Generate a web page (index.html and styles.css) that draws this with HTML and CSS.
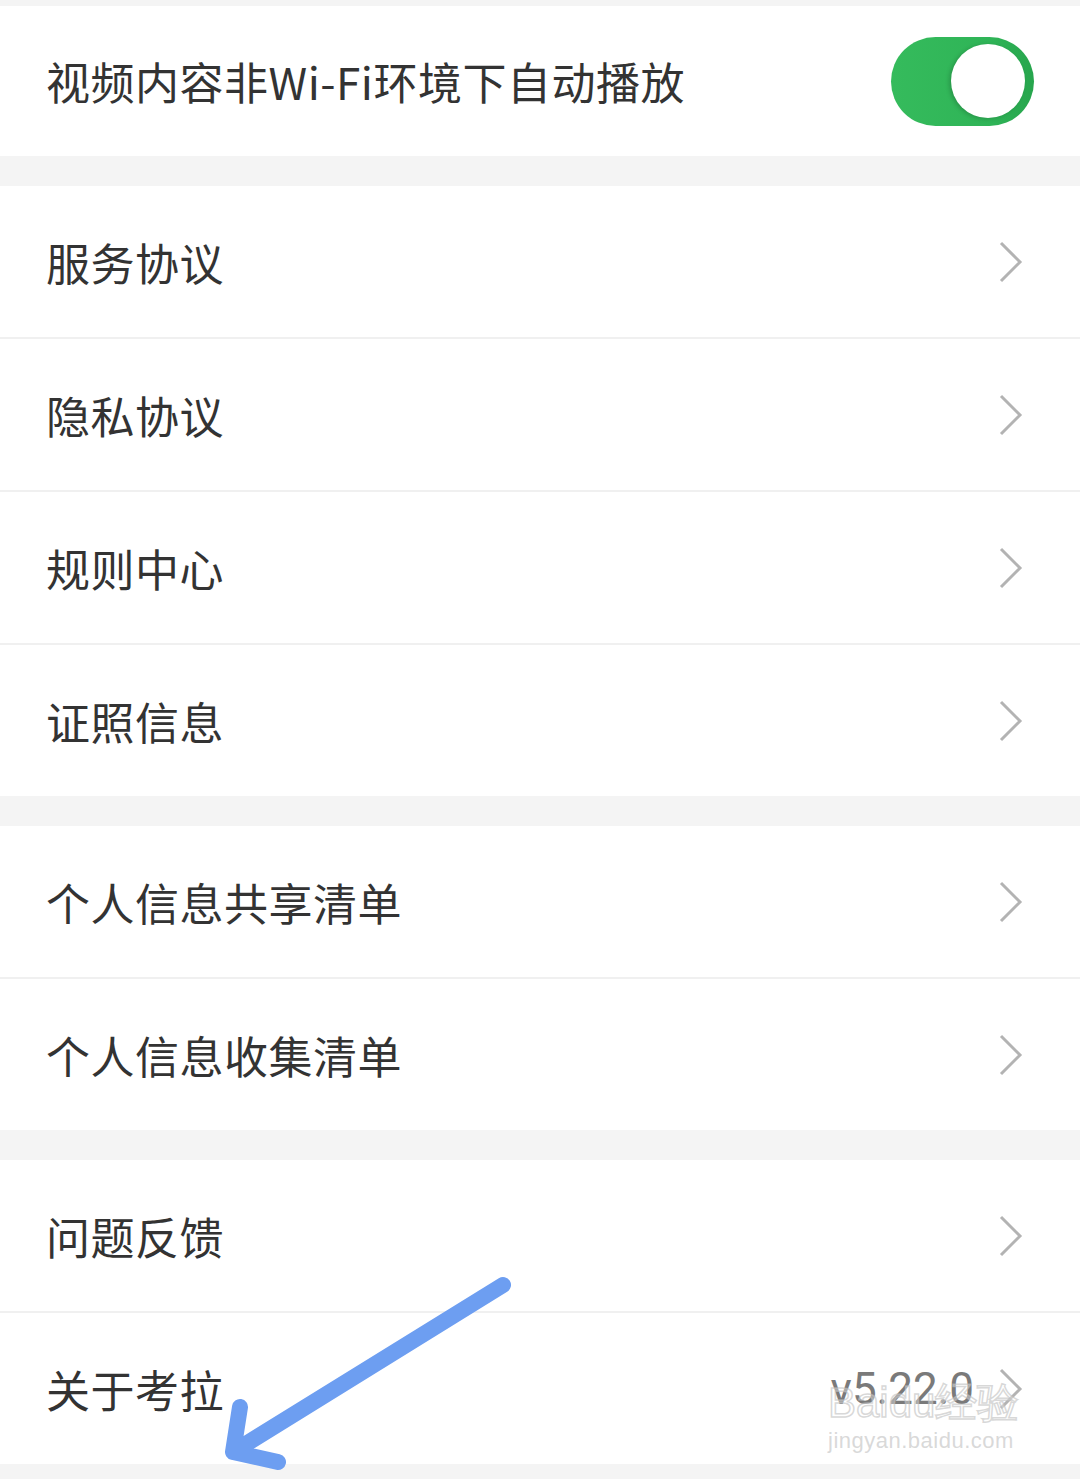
FILE: index.html
```html
<!DOCTYPE html>
<html lang="zh">

<head>
    <meta charset="UTF-8">
    <meta name="viewport" content="width=device-width, initial-scale=1.0">
    <title>设置</title>
    <link rel="stylesheet" href="styles.css">
</head>

<body>
    <main class="settings">
        <div class="gap gap-top"></div>

        <!-- Video autoplay switch -->
        <section class="group">
            <div class="row">
                <span class="label">视频内容非Wi-Fi环境下自动播放</span>
                <span class="switch on"><span class="knob"></span></span>
            </div>
        </section>

        <div class="gap"></div>

        <section class="group">
            <a class="row" href="#">
                <span class="label">服务协议</span>
                <svg class="chevron" viewBox="0 0 24 42"><polyline points="2,2 21,21 2,40" /></svg>
            </a>
            <a class="row" href="#">
                <span class="label">隐私协议</span>
                <svg class="chevron" viewBox="0 0 24 42"><polyline points="2,2 21,21 2,40" /></svg>
            </a>
            <a class="row" href="#">
                <span class="label">规则中心</span>
                <svg class="chevron" viewBox="0 0 24 42"><polyline points="2,2 21,21 2,40" /></svg>
            </a>
            <a class="row" href="#">
                <span class="label">证照信息</span>
                <svg class="chevron" viewBox="0 0 24 42"><polyline points="2,2 21,21 2,40" /></svg>
            </a>
        </section>

        <div class="gap"></div>

        <section class="group">
            <a class="row" href="#">
                <span class="label">个人信息共享清单</span>
                <svg class="chevron" viewBox="0 0 24 42"><polyline points="2,2 21,21 2,40" /></svg>
            </a>
            <a class="row" href="#">
                <span class="label">个人信息收集清单</span>
                <svg class="chevron" viewBox="0 0 24 42"><polyline points="2,2 21,21 2,40" /></svg>
            </a>
        </section>

        <div class="gap"></div>

        <section class="group">
            <a class="row" href="#">
                <span class="label">问题反馈</span>
                <svg class="chevron" viewBox="0 0 24 42"><polyline points="2,2 21,21 2,40" /></svg>
            </a>
            <a class="row" href="#">
                <span class="label">关于考拉</span>
                <span class="value">v5.22.0</span>
                <svg class="chevron" viewBox="0 0 24 42"><polyline points="2,2 21,21 2,40" /></svg>
            </a>
        </section>

        <div class="gap gap-bottom"></div>

        <!-- Screenshot annotations: watermark and arrow -->
        <div class="watermark">
            <span class="wm-logo">Baidu经验</span>
            <span class="wm-url">jingyan.baidu.com</span>
        </div>
        <svg class="arrow" viewBox="0 0 1080 1479">
            <path d="M503 1285 L233 1452 M240 1407 L233 1452 L278 1462" />
        </svg>
    </main>
</body>

</html>
```
FILE: styles.css
```css
/* Basic page */
body {
    margin: 0;
    padding: 0;
    background-color: #f4f4f4;
    font-family: "Noto Sans CJK SC", "Noto Sans", sans-serif;
    color: #333333;
}

.settings {
    position: relative;
    width: 1080px;
    min-height: 1479px;
    display: flex;
    flex-direction: column;
}

/* Gray bands between groups */
.gap {
    height: 30px;
    background-color: #f4f4f4;
}

.gap-top {
    height: 6px;
}

.gap-bottom {
    flex: 1;
    height: auto;
}

.group {
    background-color: #ffffff;
    display: flex;
    flex-direction: column;
}

/* One setting row */
.row {
    height: 151px;
    display: flex;
    align-items: center;
    padding: 0 57px 0 46px;
    text-decoration: none;
    color: #333333;
}

.row + .row {
    border-top: 2px solid #f0f0f0;
}

.group:first-of-type .row {
    height: 150px;
    padding-right: 46px;
}

.label {
    flex: 1;
    font-size: 44px;
    letter-spacing: 0.5px;
}

.value {
    font-family: Roboto, "Noto Sans", sans-serif;
    font-size: 44px;
    color: #7a7a7a;
    margin-right: 25px;
}

.chevron {
    width: 24px;
    height: 42px;
}

.chevron polyline {
    fill: none;
    stroke: #b3b3b3;
    stroke-width: 3;
}

/* Toggle switch */
.switch {
    width: 143px;
    height: 89px;
    border-radius: 45px;
    background: linear-gradient(90deg, #35bb5c 0%, #2fb457 70%, #27a54d 100%);
    display: flex;
    align-items: center;
    justify-content: flex-end;
    padding-right: 9px;
    box-sizing: border-box;
}

.knob {
    width: 74px;
    height: 74px;
    border-radius: 50%;
    background-color: #ffffff;
    box-shadow: -2px 1px 4px rgba(0, 0, 0, 0.18);
}

/* Watermark */
.watermark {
    position: absolute;
    left: 828px;
    top: 1378px;
    width: 200px;
    display: flex;
    flex-direction: column;
    align-items: flex-start;
    pointer-events: none;
}

.wm-logo {
    font-family: "Liberation Sans", sans-serif;
    font-size: 42px;
    line-height: 50px;
    color: rgba(255, 255, 255, 0.35);
    -webkit-text-stroke: 1.5px rgba(190, 190, 190, 0.6);
}

.wm-url {
    font-family: "Liberation Sans", sans-serif;
    font-size: 22px;
    line-height: 26px;
    color: rgba(200, 200, 200, 0.7);
    letter-spacing: 0.5px;
}

/* Blue arrow */
.arrow {
    position: absolute;
    left: 0;
    top: 0;
    width: 1080px;
    height: 1479px;
    pointer-events: none;
}

.arrow path {
    fill: none;
    stroke: #6d9ef1;
    stroke-width: 16;
    stroke-linecap: round;
    stroke-linejoin: round;
}
```
